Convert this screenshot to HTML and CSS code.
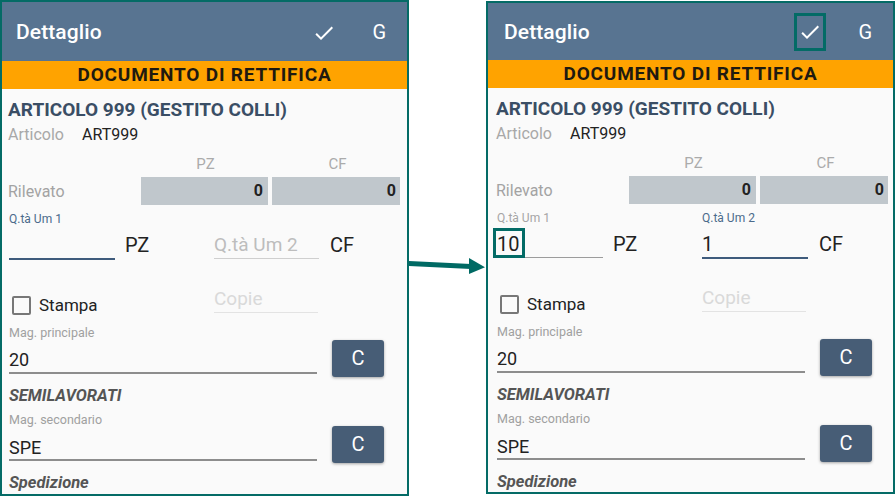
FILE: index.html
```html
<!DOCTYPE html>
<html lang="it">
<head>
<meta charset="utf-8">
<title>Dettaglio</title>
<link rel="stylesheet" href="styles.css">
</head>
<body>
<div class="stage">
  <section class="panel">
    <header class="appbar">
      <span class="appbar__title">Dettaglio</span>
      <span class="appbar__check"><svg width="24" height="24" viewBox="0 0 24 24"><path d="M9 16.17L4.83 12l-1.42 1.41L9 19 21 7l-1.41-1.41z" fill="#fff"/></svg></span>
      <span class="appbar__g">G</span>
    </header>
    <div class="banner">DOCUMENTO DI RETTIFICA</div>
    <div class="content">
      <div class="title">ARTICOLO 999 (GESTITO COLLI)</div>
      <div class="art"><span class="art__lbl">Articolo</span><span class="art__val">ART999</span></div>
      <div class="units"><span class="units__sp"></span><span class="units__c">PZ</span><span class="units__c">CF</span></div>
      <div class="ril"><span class="ril__lbl">Rilevato</span><span class="ril__box">0</span><span class="ril__box">0</span></div>
      <div class="qlabels"><span class="qlabels__a qlabels__a--focus">Q.tà Um 1</span><span class="qlabels__b"></span></div>
      <div class="qrow">
        <span class="field field--q field--focus"></span>
        <span class="unit">PZ</span>
        <span class="field field--q field--ph">Q.tà Um 2</span>
        <span class="unit unit--cf">CF</span>
      </div>
      <div class="prow">
        <span class="chk"><span class="chk__box"></span><span class="chk__lbl">Stampa</span></span>
        <span class="field field--copie">Copie</span>
      </div>
      <div class="small">Mag. principale</div>
      <div class="vrow"><span class="field field--val">20</span><span class="btn">C</span></div>
      <div class="sect">SEMILAVORATI</div>
      <div class="small small--2">Mag. secondario</div>
      <div class="vrow vrow--2"><span class="field field--val">SPE</span><span class="btn">C</span></div>
      <div class="sect sect--2">Spedizione</div>
    </div>
  </section>

  <div class="gap">
    <svg width="77" height="30" viewBox="0 0 77 30"><line x1="-1" y1="13.5" x2="62" y2="16.5" stroke="#006a64" stroke-width="5"/><polygon points="60,8 76,17.3 60,24" fill="#006a64"/></svg>
  </div>

  <section class="panel panel--r">
    <header class="appbar">
      <span class="appbar__title">Dettaglio</span>
      <span class="appbar__check appbar__check--hl"><svg width="24" height="24" viewBox="0 0 24 24"><path d="M9 16.17L4.83 12l-1.42 1.41L9 19 21 7l-1.41-1.41z" fill="#fff"/></svg></span>
      <span class="appbar__g">G</span>
    </header>
    <div class="banner">DOCUMENTO DI RETTIFICA</div>
    <div class="content">
      <div class="title">ARTICOLO 999 (GESTITO COLLI)</div>
      <div class="art"><span class="art__lbl">Articolo</span><span class="art__val">ART999</span></div>
      <div class="units"><span class="units__sp"></span><span class="units__c">PZ</span><span class="units__c">CF</span></div>
      <div class="ril"><span class="ril__lbl">Rilevato</span><span class="ril__box">0</span><span class="ril__box">0</span></div>
      <div class="qlabels"><span class="qlabels__a">Q.tà Um 1</span><span class="qlabels__b qlabels__a--focus">Q.tà Um 2</span></div>
      <div class="qrow">
        <span class="field field--q">10<span class="hl"></span></span>
        <span class="unit">PZ</span>
        <span class="field field--q field--focus">1</span>
        <span class="unit unit--cf">CF</span>
      </div>
      <div class="prow">
        <span class="chk"><span class="chk__box"></span><span class="chk__lbl">Stampa</span></span>
        <span class="field field--copie">Copie</span>
      </div>
      <div class="small">Mag. principale</div>
      <div class="vrow"><span class="field field--val">20</span><span class="btn">C</span></div>
      <div class="sect">SEMILAVORATI</div>
      <div class="small small--2">Mag. secondario</div>
      <div class="vrow vrow--2"><span class="field field--val">SPE</span><span class="btn">C</span></div>
      <div class="sect sect--2">Spedizione</div>
    </div>
  </section>
</div>
</body>
</html>
```

FILE: styles.css
```css
* { box-sizing: border-box; }
html, body { margin: 0; padding: 0; background: #fff; }
body { font-family: Roboto, "Noto Sans", sans-serif; width: 895px; height: 497px; overflow: hidden; }

.stage { display: flex; align-items: flex-start; }

.panel {
  width: 409px;
  height: 496px;
  border: 2px solid #046b66;
  background: #fafafa;
  overflow: hidden;
  display: flex;
  flex-direction: column;
}
.panel--r { height: 493px; margin-top: 1px; }

.gap { width: 77px; flex: none; padding-top: 250px; display: flex; }

.appbar {
  height: 59px;
  flex: none;
  background: #587491;
  display: flex;
  align-items: center;
  padding: 0 21px 0 14px;
  color: #fff;
}
.panel--r .appbar { height: 57px; padding-left: 16px; }
.appbar__title { font-size: 21px; font-weight: 500; letter-spacing: 0.1px; }
.appbar__check {
  margin-left: auto;
  width: 32px;
  height: 38px;
  display: flex;
  align-items: center;
  justify-content: center;
  padding-top: 3px;
}
.appbar__check--hl { border: 3px solid #036b66; padding-top: 1px; }
.appbar__g { margin-left: 32px; font-size: 20px; }

.banner {
  height: 28px;
  flex: none;
  background: #ffa300;
  color: #1f1a10;
  font-weight: 700;
  font-size: 19px;
  line-height: 28px;
  text-align: center;
  letter-spacing: 0.8px;
}

.content { padding-left: 7px; display: flex; flex-direction: column; }
.panel--r .content { padding-left: 9px; }

.title {
  margin-top: 7px;
  height: 28px;
  line-height: 28px;
  font-size: 19px;
  font-weight: 700;
  color: #3a4e65;
  margin-left: -1px;
}

.art { margin-top: 1px; height: 20px; line-height: 20px; font-size: 16px; display: flex; }
.art__lbl { width: 74px; color: #a8a8a8; margin-left: -1px; }
.art__val { color: #222; }

.units { margin-top: 9px; height: 20px; line-height: 20px; display: flex; font-size: 15px; color: #ababab; }
.units__sp { width: 133px; }
.units__c { width: 127px; text-align: center; }
.units__c + .units__c { margin-left: 5px; }

.ril { margin-top: 3px; height: 28px; display: flex; align-items: center; }
.ril__lbl { width: 133px; font-size: 16px; color: #a3a3a3; margin-left: -1px; padding-left: 0; }
.ril__box {
  width: 127px;
  height: 28px;
  line-height: 28px;
  background: #c0c7cc;
  text-align: right;
  padding-right: 5px;
  font-size: 16px;
  font-weight: 700;
  color: #222;
}
.ril__box + .ril__box { margin-left: 4px; width: 128px; padding-right: 4px; }

.qlabels { margin-top: 6px; height: 17px; line-height: 17px; display: flex; font-size: 12px; color: #a5a5a5; }
.qlabels__a { width: 205px; }
.qlabels__a--focus { color: #4b6a8b; }

.qrow { display: flex; align-items: flex-start; }
.field { position: relative; display: block; }
.field--q {
  width: 106px;
  padding-top: 3px;
  height: 31px;
  line-height: 28px;
  font-size: 20px;
  color: #222;
  border-bottom: 1px solid #9c9c9c;
}
.field--focus { border-bottom: 2px solid #3e5b7c; height: 32px; }
.field--ph { color: #bdbdbd; font-size: 19px; width: 105px; border-bottom-color: #cfcfcf; }
.unit { width: 99px; padding-left: 10px; padding-top: 3px; line-height: 28px; font-size: 20px; color: #222; }
.unit--cf { width: auto; padding-left: 11px; }

.hl {
  position: absolute;
  left: -4px;
  top: 1px;
  width: 32px;
  height: 30px;
  border: 3px solid #036b66;
}

.prow { margin-top: 25px; height: 32px; display: flex; align-items: flex-start; }
.chk { width: 205px; margin-top: 8px; height: 24px; display: flex; align-items: center; }
.chk__box { width: 19px; height: 19px; border: 2px solid #777; border-radius: 2px; margin-left: 3px; }
.chk__lbl { margin-left: 8px; font-size: 17px; color: #222; }
.field--copie {
  width: 104px;
  height: 28px;
  padding-top: 2px;
  line-height: 24px;
  font-size: 19px;
  color: #d9d9d9;
  border-bottom: 1px solid #e3e3e3;
}

.small { margin-top: 8px; height: 16px; line-height: 16px; font-size: 12.5px; color: #a0a0a0; }
.small--2 { margin-top: 6px; }

.vrow { display: flex; align-items: flex-start; }
.field--val {
  width: 308px;
  padding-top: 7px;
  height: 33px;
  line-height: 24px;
  font-size: 18px;
  color: #222;
  border-bottom: 2px solid #8d8d8d;
}
.vrow--2 .field--val { padding-top: 8px; height: 33px; }
.btn {
  margin-left: 15px;
  margin-top: -1px;
  width: 52px;
  height: 37px;
  border-radius: 3px;
  background: #475d76;
  color: #fff;
  font-size: 20px;
  line-height: 37px;
  text-align: center;
  box-shadow: 0 1px 3px rgba(0,0,0,0.35);
}
.vrow--2 .btn { margin-top: -2px; }

.sect { margin-top: 9px; height: 20px; line-height: 20px; font-size: 16.5px; font-weight: 700; font-style: italic; color: #555; }
.sect--2 { margin-top: 10px; }
```
